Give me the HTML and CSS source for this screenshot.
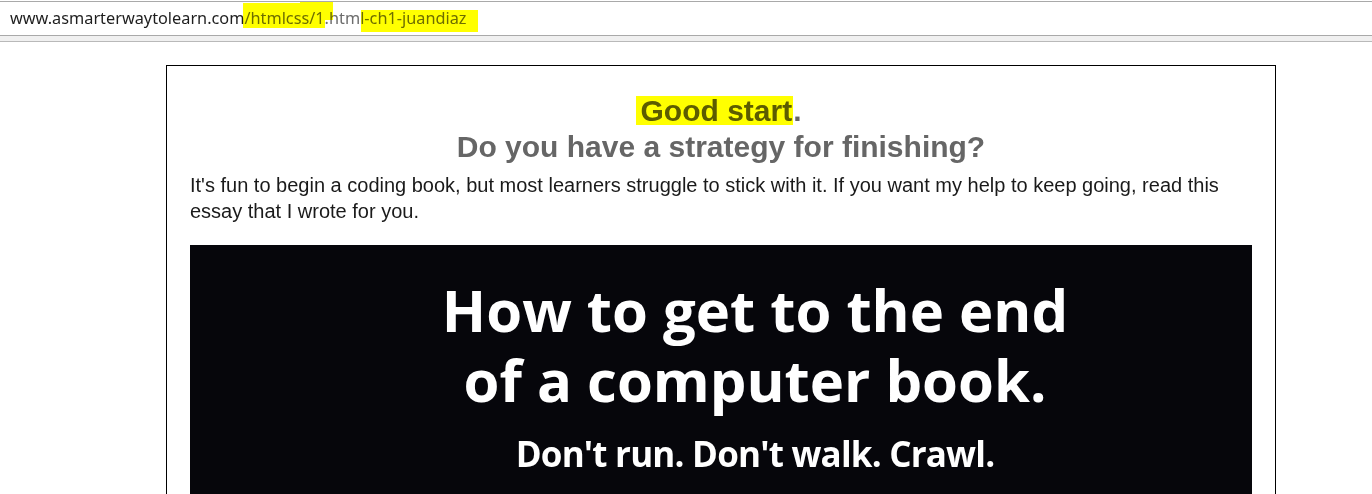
FILE: index.html
```html
<!DOCTYPE html>
<html>
<head>
<meta charset="utf-8">
<link rel="stylesheet" href="styles.css">
</head>
<body>
<header class="chrome">
  <div class="urlbar">
    <span class="url"><span class="domain">www.asmarterwaytolearn.com</span>/htmlcss/1.html-ch1-juandiaz</span>
    <span class="mark mark-a"></span>
    <span class="mark mark-b"></span>
    <span class="mark mark-c"></span>
  </div>
  <div class="tabstrip"></div>
</header>
<main class="page">
  <section class="card">
    <h1 class="title">
      <span class="line"><span class="hl">Good start</span>.</span>
      <span class="line">Do you have a strategy for finishing?</span>
    </h1>
    <p class="lead">It's fun to begin a coding book, but most learners struggle to stick with it. If you want my help to keep going, read this essay that I wrote for you.</p>
    <div class="banner">
      <div class="banner-title">How to get to the end<br>of a computer book.</div>
      <div class="banner-sub">Don't run. Don't walk. Crawl.</div>
    </div>
  </section>
</main>
</body>
</html>
```

FILE: styles.css
```css
html, body {
  margin: 0;
  padding: 0;
  background: #ffffff;
}

body {
  width: 1372px;
  height: 494px;
  overflow: hidden;
}

.chrome {
  padding-top: 1px;
}

.urlbar {
  position: relative;
  height: 35px;
  box-sizing: border-box;
  border-top: 1px solid #a9a9a9;
  border-bottom: 1px solid #a9a9a9;
  background: #ffffff;
  display: flex;
  align-items: center;
  padding-left: 10px;
}

.url {
  font-family: "Noto Sans", "Open Sans", sans-serif;
  font-size: 16.3px;
  color: #6d6d6d;
  padding-bottom: 1px;
}

.domain {
  color: #1e1e1e;
}

.mark {
  position: absolute;
  background: #ffff00;
  mix-blend-mode: multiply;
}

.mark-a {
  left: 243px;
  top: 1px;
  width: 82px;
  height: 25px;
}

.mark-b {
  left: 300px;
  top: 0px;
  width: 33px;
  height: 18px;
}

.mark-c {
  left: 361px;
  top: 8px;
  width: 117px;
  height: 22px;
}

.tabstrip {
  height: 5px;
  background: #f0f0f0;
  border-bottom: 1px solid #b9b9b9;
}

.page {
  padding: 23px 0 0 166px;
}

.card {
  width: 1110px;
  box-sizing: border-box;
  border: 1px solid #000000;
  padding: 27px 23px 0 23px;
  font-family: "Liberation Sans", Arial, sans-serif;
}

.title {
  margin: 0;
  font-size: 30px;
  line-height: 36px;
  font-weight: bold;
  color: #666666;
  text-align: center;
}

.line {
  display: block;
}

.hl {
  display: inline-block;
  line-height: 29px;
  background: #ffff00;
  color: #5c5c00;
  padding: 0 1px 0 4px;
  margin-left: -4px;
}

.lead {
  margin: 7px 0 0 0;
  font-size: 20px;
  line-height: 26px;
  color: #1a1a1a;
}

.banner {
  margin-top: 21px;
  height: 260px;
  background: #06060b;
  color: #ffffff;
  font-family: "Open Sans", sans-serif;
  font-weight: 700;
  text-align: center;
  padding: 30px 0 0 68px;
  box-sizing: border-box;
}

.banner-title {
  font-size: 58px;
  line-height: 70px;
}

.banner-sub {
  margin-top: 14px;
  font-size: 35px;
  line-height: 50px;
  letter-spacing: -0.8px;
}
```
